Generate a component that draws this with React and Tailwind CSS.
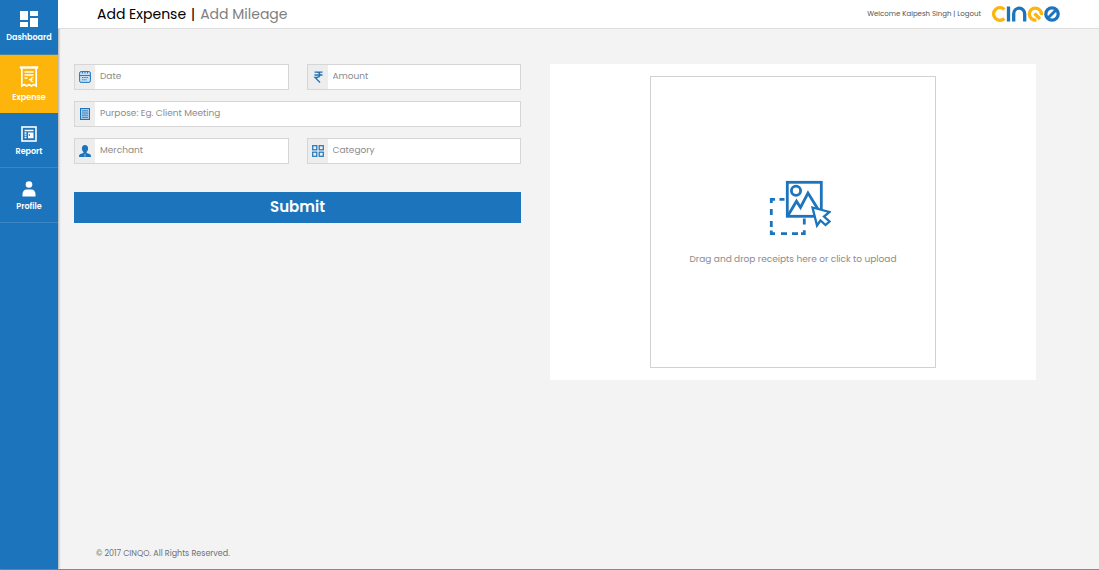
import React from "react";

const stroke = { fill: "none", stroke: "currentColor" };

function DashboardIcon() {
  return (
    <svg className="h-[18px] w-[18px]" viewBox="0 0 18 18" fill="currentColor" aria-hidden="true">
      <path d="M0 1h8v9H0zM10 1h8v5h-8zM0 12h8v5H0zM10 8h8v9h-8z" />
    </svg>
  );
}

function ExpenseIcon() {
  return (
    <svg className="h-[22px] w-5" viewBox="0 0 20 22" {...stroke} strokeWidth="1.7" aria-hidden="true">
      <path d="M.8 1.5h18.400" strokeWidth="2.400" />
      <path d="M2.800 2v18l2.400-1.400L7.600 20l2.400-1.400 2.400 1.400 2.400-1.400 2.400 1.400V2" />
      <path d="M5.500 6h9M5.500 9h9M5.500 12h3" strokeWidth="1.600" />
      <path d="M14.500 11.800c-3.200-.9-3.900 4.300-.2 3.900M10 13.700h3.500" strokeWidth="1.300" />
    </svg>
  );
}

function ReportIcon() {
  return (
    <svg className="h-4 w-4" viewBox="0 0 16 16" aria-hidden="true">
      <rect x="1" y="1" width="14" height="14" {...stroke} strokeWidth="1.6" />
      <path d="M3.500 4.500h9M3.500 7h2M3.500 9.200h2M3.500 11.500h2" {...stroke} strokeWidth="1.300" />
      <path d="M7 6.500h5.500v5.800H7z" fill="currentColor" />
      <path d="M8.300 8v2" fill="none" stroke="#1c74bc" strokeWidth="1" />
    </svg>
  );
}

function ProfileIcon() {
  return (
    <svg className="h-4 w-[14px]" viewBox="0 0 14 16" fill="currentColor" aria-hidden="true">
      <circle cx="7" cy="3.500" r="3.300" />
      <path d="M.5 15.500V13c0-2.500 2-4.600 4-4.600h5c2 0 4 2.100 4 4.600v2.500z" />
    </svg>
  );
}

function CalendarIcon() {
  return (
    <svg className="h-3 w-3" viewBox="0 0 12 12" {...stroke} aria-hidden="true">
      <rect x=".6" y=".6" width="10.800" height="10.800" rx="1.500" fill="#c9dff0" strokeWidth="1" />
      <path d="M1 4.500h10M3.500 0v2.500M6 0v2.500M8.500 0v2.500" strokeWidth=".9" />
      <path d="M3 6.500h6M3 8.800h5" strokeWidth=".9" strokeDasharray="1.500 .7" />
    </svg>
  );
}

function RupeeIcon() {
  return (
    <svg className="h-3 w-3" viewBox="0 0 12 12" {...stroke} strokeWidth="1.300" aria-hidden="true">
      <path d="M2.500 1.200h8M2.500 4h8M2.500 1.200h2.300c4 0 4 5.300 0 5.300H3l5 5" />
    </svg>
  );
}

function NoteIcon() {
  return (
    <svg className="h-3 w-3" viewBox="0 0 12 12" {...stroke} aria-hidden="true">
      <rect x="1.500" y=".5" width="9" height="11" fill="#a9cae6" strokeWidth="1" />
      <path d="M3 2.800h6M3 5h6M3 7.200h6M3 9.400h6" strokeWidth=".8" />
    </svg>
  );
}

function MerchantIcon() {
  return (
    <svg className="h-3 w-3" viewBox="0 0 12 12" fill="currentColor" aria-hidden="true">
      <path d="M6 0c2 0 3.100 1.400 3.100 3.200 0 1.600-.6 2.900-1.500 3.700v1l3 1c.9.300 1.400 1 1.400 3.100H0c0-2.100.5-2.800 1.400-3.100l3-1v-1C3.500 6.100 2.900 4.800 2.900 3.200 2.900 1.400 4 0 6 0z" />
      <path d="M6 8.800v3" stroke="#c9dff0" strokeWidth=".7" />
    </svg>
  );
}

function CategoryIcon() {
  return (
    <svg className="h-3 w-3" viewBox="0 0 12 12" {...stroke} strokeWidth="1.200" aria-hidden="true">
      <rect x=".7" y=".7" width="4.100" height="4.100" />
      <rect x="7.200" y=".7" width="4.100" height="4.100" />
      <rect x=".7" y="7.200" width="4.100" height="4.100" />
      <rect x="7.200" y="7.200" width="4.100" height="4.100" />
    </svg>
  );
}

function UploadIcon() {
  return (
    <svg className="h-[56px] w-[76px] text-[#1c74bc]" viewBox="-14 0 76 56" {...stroke} strokeWidth="2.800" aria-hidden="true">
      <path d="M2.300 23v-3.700H6M10.500 19.300h5M2.300 29v6M2.300 41v6M2.300 50.500v3.200H6M12 53.700h6M23 53.700h6M32 53.700h3.300v-3.500M35.300 38.500v6" />
      <rect x="18.300" y="2.300" width="34" height="34" />
      <circle cx="27" cy="10.800" r="4.600" />
      <path d="M19 35.500l8.500-14.300 4 6.300L39 13l13 21" />
      <path d="M43.500 27.500l17 4.500-5.500 4.500 5.500 5-4 3.500-5-4.500-3.500 5z" fill="#fff" strokeWidth="2.300" />
    </svg>
  );
}

function Logo() {
  return (
    <svg className="h-4 w-[68px]" viewBox="0 0 68 16" fill="none" strokeWidth="3.300" role="img" aria-label="CINQO">
      <path d="M12.300 3.500A6.300 6.300 0 1 0 12.300 12.500" stroke="#fdb40b" />
      <path d="M16.500 .5v15M21.700 15.500V8a5.500 5.800 0 0 1 11 0v7.500" stroke="#1c74bc" />
      <path d="M44.500 14A6 6 0 1 1 49.300 9M42.500 7.500l5.500 5.500" stroke="#fdb40b" />
      <circle cx="60" cy="8" r="6.200" stroke="#1c74bc" />
      <path d="M56 12l8-8" stroke="#1c74bc" strokeWidth="2.800" />
    </svg>
  );
}

const navItems = [
  { label: "Dashboard", icon: DashboardIcon, style: "h-[55px] border-b border-[#4a86a0]" },
  { label: "Expense", icon: ExpenseIcon, style: "h-[58px] pt-0.5 bg-[#fdb40b]", current: true },
  { label: "Report", icon: ReportIcon, style: "h-[55px] pt-1 border-b border-[#3b86c5]" },
  { label: "Profile", icon: ProfileIcon, style: "h-[55px] pt-1 border-b border-[#3b86c5]" },
];

function Sidebar() {
  return (
    <nav className="w-[58px] shrink-0 bg-[#1c74bc] shadow-[1px_0_2px_rgba(0,0,0,0.3)]">
      {navItems.map(({ label, icon: Icon, style, current }) => (
        <a
          key={label}
          href="#"
          aria-current={current ? "page" : undefined}
          className={`flex flex-col items-center justify-center gap-1 text-[8px] leading-3 font-semibold text-white ${style}`}
        >
          <Icon />
          {label}
        </a>
      ))}
    </nav>
  );
}

function Field({ id, label, icon: Icon, wide }) {
  return (
    <div className={`flex h-[26px] border border-[#d6d6d6] bg-white ${wide ? "col-span-2" : ""}`}>
      <label htmlFor={id} className="flex w-5 shrink-0 items-center justify-center bg-[#ededed] pb-px text-[#1c74bc]">
        <Icon />
      </label>
      <input
        id={id}
        type="text"
        aria-label={label}
        placeholder={label}
        className="min-w-0 flex-1 px-[5px] pb-0.5 text-[9px] leading-4 text-[#555] outline-none placeholder:text-[#8c8c8c]"
      />
    </div>
  );
}

export default function App() {
  return (
    <div className="flex min-h-screen border-b border-[#8a8a8a] bg-[#f3f3f3] font-['Poppins','Inter',sans-serif]">
      <Sidebar />
      <div className="flex min-w-0 flex-1 flex-col">
        <header className="flex h-[29px] items-center justify-between border-b border-[#dedede] bg-white px-[39px]">
          <h1 className="flex gap-[5px] text-sm leading-5 text-[#808080]">
            <a href="#" className="text-black">Add Expense</a>
            <span className="text-black">|</span>
            <a href="#">Add Mileage</a>
          </h1>
          <div className="flex items-center gap-[11px]">
            <p className="text-[7px] leading-3 text-[#555]">
              Welcome Kalpesh Singh | <a href="#">Logout</a>
            </p>
            <Logo />
          </div>
        </header>

        <main className="grid flex-1 grid-cols-[447fr_486fr] items-start gap-[29px] pt-[35px] pr-[63px] pb-6 pl-4">
          <form className="grid grid-cols-2 gap-x-[18px] gap-y-[11px]" onSubmit={(e) => e.preventDefault()}>
            <Field id="date" label="Date" icon={CalendarIcon} />
            <Field id="amount" label="Amount" icon={RupeeIcon} />
            <Field id="purpose" label="Purpose: Eg. Client Meeting" icon={NoteIcon} wide />
            <Field id="merchant" label="Merchant" icon={MerchantIcon} />
            <Field id="category" label="Category" icon={CategoryIcon} />
            <button type="submit" className="col-span-2 mt-[17px] h-[31px] bg-[#1c74bc] text-[15px] font-semibold text-white">
              Submit
            </button>
          </form>

          <section className="flex justify-center bg-white py-3">
            <label
              htmlFor="receipts"
              className="relative flex h-[292px] w-[59%] cursor-pointer flex-col items-center justify-center gap-[15px] border border-[#d2d2d2] pt-0.5 text-[9px] leading-4 text-[#8c8c8c]"
            >
              <UploadIcon />
              <span>Drag and drop receipts here or click to upload</span>
              <input id="receipts" type="file" multiple className="sr-only" />
            </label>
          </section>
        </main>

        <footer className="px-[38px] pb-[7px] text-[8px] leading-4 text-[#707070]">
          © 2017 CINQO. All Rights Reserved.
        </footer>
      </div>
    </div>
  );
}
